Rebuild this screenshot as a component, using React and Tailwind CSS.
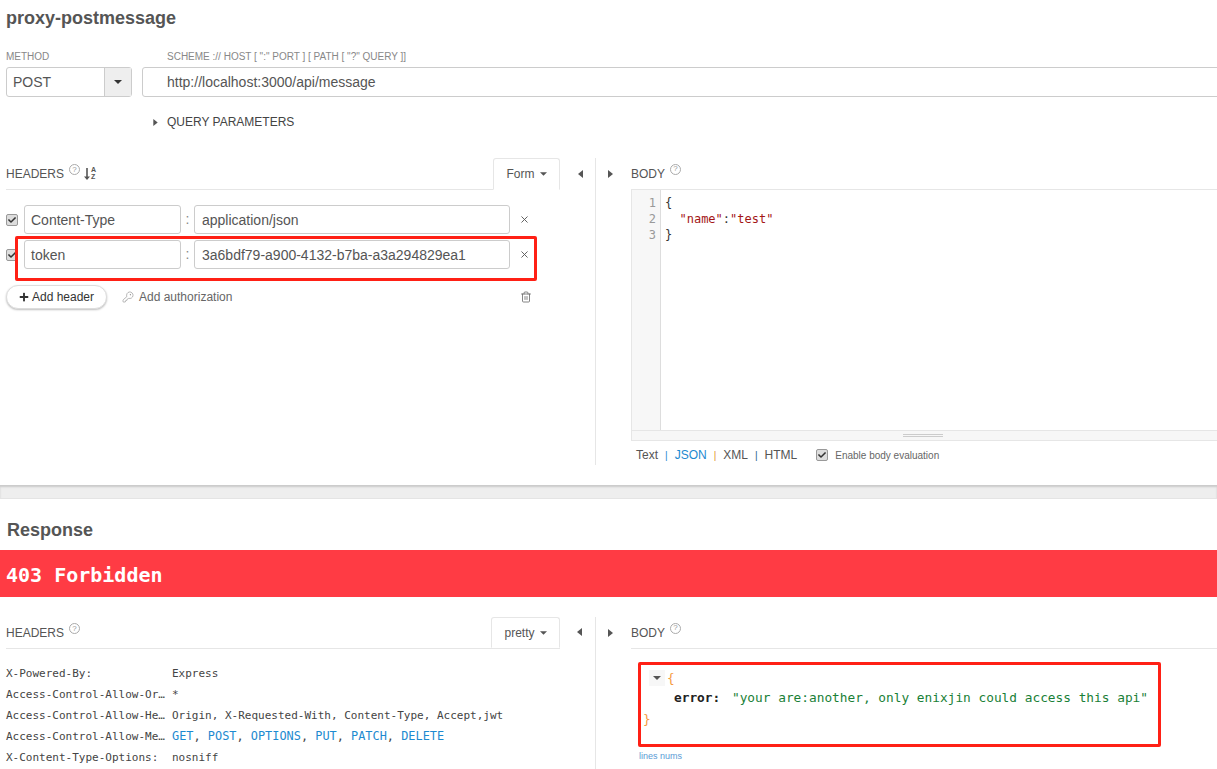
import React from "react";
import { FaCheck, FaPlus } from "react-icons/fa";
import { X, Trash2, KeyRound } from "lucide-react";

const SANS = "font-['Liberation_Sans',Arial,sans-serif]";
const MONO = "font-['DejaVu_Sans_Mono',monospace]";

const Caret = ({ dir = "down", className = "" }) => {
  const points = {
    down: "0,0 8,0 4,4",
    left: "5,0 5,8 0,4",
    right: "0,0 5,4 0,8",
  }[dir];
  const size = dir === "down" ? [8, 4] : [5, 8];
  return (
    <svg width={size[0]} height={size[1]} viewBox={`0 0 ${size[0]} ${size[1]}`} className={className}>
      <polygon points={points} fill="currentColor" />
    </svg>
  );
};

const Help = () => (
  <span className="ml-[5px] mb-[9px] flex h-[11px] w-[11px] items-center justify-center rounded-full border border-[#aaa] text-[8px] leading-none text-[#999]">
    ?
  </span>
);

const Check = () => (
  <span className="flex h-[12px] w-[12px] shrink-0 items-center justify-center rounded-[2px] border border-[#999] bg-[#ddd] text-[#333]">
    <FaCheck size={8} />
  </span>
);

const Field = ({ value, className = "" }) => (
  <div className={`flex h-[29px] items-center rounded-[3px] border border-[#ccc] bg-white pt-[1px] text-[14px] text-[#555] ${className}`}>
    {value}
  </div>
);

const HeaderRow = ({ name, value }) => (
  <div className="flex h-[29px] items-center">
    <Check />
    <Field value={name} className="ml-[6px] w-[157px] pl-[6px]" />
    <span className="w-[13px] text-center text-[14px] text-[#888]">:</span>
    <Field value={value} className="w-[316px] pl-[7px]" />
    <X size={11} strokeWidth={2} className="ml-[9px] text-[#555]" />
  </div>
);

const Sep = ({ className = "" }) => <span className={`text-[10px] ${className}`}>|</span>;

const RespHeader = ({ name, children, className = "" }) => (
  <div className="flex h-[21px] items-center whitespace-pre">
    <span className="w-[166px] text-[#444]">{name}</span>
    <span className={`text-[#444] ${className}`}>{children}</span>
  </div>
);

const Method = ({ children }) => <span className="text-[#1d8ad0]">{children}</span>;

export default function App() {
  return (
    <div className={`${SANS} relative h-[769px] w-[1217px] overflow-hidden bg-white text-[#555]`}>
      {/* Request */}
      <div className="h-[485px]">
        <h1 className="flex h-[37px] items-center pl-[6px] text-[18px] font-bold text-[#555]">proxy-postmessage</h1>
        <div className="flex h-[30px] items-end pb-[5px] text-[10px] leading-none text-[#888]">
          <span className="w-[167px] pl-[6px]">METHOD</span>
          <span>SCHEME :// HOST [ ":" PORT ] [ PATH [ "?" QUERY ]]</span>
        </div>
        <div className="flex h-[30px] pl-[6px]">
          <div className="flex h-[30px] w-[126px] shrink-0 rounded-[3px] border border-[#ccc] text-[14px]">
            <span className="flex flex-1 items-center pl-[6px] text-[#555]">POST</span>
            <span className="flex w-[27px] items-center justify-center border-l border-[#ccc] bg-[#eee] text-[#333]">
              <Caret />
            </span>
          </div>
          <div className="ml-[10px] flex h-[30px] w-[1100px] shrink-0 items-center rounded-[3px] border border-[#ccc] pl-[24px] text-[14px] text-[#555]">
            http://localhost:3000/api/message
          </div>
        </div>
        <div className="mt-[17px] flex h-[16px] items-center text-[12px] text-[#444]">
          <Caret dir="right" className="ml-[153px] mr-[9px] h-[7px] text-[#555]" />
          QUERY PARAMETERS
        </div>

        <div className="mt-[28px] flex h-[307px]">
          {/* Request headers */}
          <div className="flex w-[596px] shrink-0 border-r border-[#e6e6e6] pl-[6px]">
            <div className="w-[554px]">
              <div className="flex h-[32px] items-center justify-between border-b border-[#e6e6e6]">
                <div className="flex items-center pt-[1px] text-[12px] text-[#555]">
                  HEADERS
                  <Help />
                  <span className="relative ml-[4px] flex h-[14px] w-[12px] items-center text-[#555]">
                    <svg width="6" height="12" viewBox="0 0 6 12">
                      <path d="M2.2 0h1.6v8.5H6L3 12 0 8.5h2.2z" fill="currentColor" />
                    </svg>
                    <span className="absolute right-0 top-[-1px] text-[7px] font-bold leading-[7px]">
                      A
                      <br />Z
                    </span>
                  </span>
                </div>
                <div className="flex h-[32px] w-[67px] items-center justify-center gap-[5px] rounded-t-[3px] border border-b-white border-[#e6e6e6] text-[12px] text-[#555]">
                  Form <Caret className="h-[4px] w-[7px]" />
                </div>
              </div>
              <div className="relative mt-[15px] flex flex-col gap-[6px]">
                <HeaderRow name="Content-Type" value="application/json" />
                <HeaderRow name="token" value="3a6bdf79-a900-4132-b7ba-a3a294829ea1" />
                <div className="absolute left-[9px] top-[31px] h-[45px] w-[522px] rounded-[2px] border-[3px] border-[#ff2015]" />
              </div>
              <div className="mt-[16px] flex h-[24px] items-center text-[12px]">
                <div className="flex h-[24px] w-[101px] items-center justify-center gap-[3px] rounded-full border border-[#ddd] bg-white text-[#333] shadow-[0_1px_2px_rgba(0,0,0,0.25)]">
                  <FaPlus size={10} /> Add header
                </div>
                <KeyRound size={12} strokeWidth={1.2} className="ml-[15px] text-[#888]" />
                <span className="ml-[5px] text-[#666]">Add authorization</span>
                <Trash2 size={12} strokeWidth={1.6} className="ml-[288px] text-[#666]" />
              </div>
            </div>
            <div className="flex h-[32px] flex-1 items-center justify-center pl-[5px] text-[#555]">
              <Caret dir="left" />
            </div>
          </div>

          {/* Request body */}
          <div className="flex min-w-0 flex-1 flex-col pr-0">
            <div className="flex h-[31px] shrink-0 items-center">
              <span className="flex w-[35px] justify-center pr-[6px] text-[#555]">
                <Caret dir="right" />
              </span>
              <span className="flex items-center text-[12px] text-[#555]">
                BODY
                <Help />
              </span>
            </div>
            <div className="ml-[35px] flex h-[252px] flex-col border-y border-l border-[#e6e6e6]">
              <div className={`${MONO} flex flex-1 text-[12px] leading-[16px]`}>
                <div className="w-[29px] border-r border-[#ddd] bg-[#f7f7f7] pr-[4px] pt-[5px] text-right text-[#999]">
                  <div>1</div>
                  <div>2</div>
                  <div>3</div>
                </div>
                <div className="whitespace-pre pl-[4px] pt-[5px] text-[#333]">
                  <div>{"{"}</div>
                  <div>
                    {"  "}
                    <span className="text-[#a31515]">"name"</span>:<span className="text-[#a31515]">"test"</span>
                  </div>
                  <div>{"}"}</div>
                </div>
              </div>
              <div className="flex h-[10px] items-center justify-center border-t border-[#e6e6e6] bg-[#f7f7f7]">
                <div className="ml-[-3px] h-[3px] w-[40px] border-y border-[#ccc]" />
              </div>
            </div>
            <div className="ml-[40px] mt-[6px] flex h-[16px] items-center text-[12px] text-[#555]">
              <span>Text</span>
              <Sep className="mx-[7px] text-[#1d8ad0]" />
              <span className="text-[#1d8ad0]">JSON</span>
              <Sep className="mx-[7px] text-[#e0912f]" />
              <span>XML</span>
              <Sep className="mx-[7px] text-[#1d5f8a]" />
              <span>HTML</span>
              <span className="ml-[19px]">
                <Check />
              </span>
              <span className="ml-[7px] text-[10px] text-[#666]">Enable body evaluation</span>
            </div>
          </div>
        </div>
      </div>

      <div className="h-[14px] border-b border-[#e4e4e4] bg-[#eee] shadow-[inset_0_2px_2px_rgba(0,0,0,0.15)]" />

      {/* Response */}
      <h2 className="flex h-[51px] items-end pb-[9px] pl-[7px] text-[18px] font-bold leading-[22px] text-[#555]">Response</h2>
      <div className={`${MONO} flex h-[47px] items-center bg-[#ff3b44] pl-[6px] pt-[2px] text-[20px] font-bold text-white`}>
        403 Forbidden
      </div>

      <div className="mt-[20px] flex h-[152px]">
        {/* Response headers */}
        <div className="flex w-[596px] shrink-0 border-r border-[#e6e6e6] pl-[6px]">
          <div className="w-[554px]">
            <div className="flex h-[32px] items-end justify-between border-b border-[#e6e6e6]">
              <div className="flex h-[30px] items-center text-[12px] text-[#555]">
                HEADERS
                <Help />
              </div>
              <div className="flex h-[31px] w-[69px] items-center justify-center gap-[5px] rounded-t-[3px] border border-b-white border-[#e6e6e6] text-[12px] text-[#555]">
                pretty <Caret className="h-[4px] w-[7px]" />
              </div>
            </div>
            <div className={`${MONO} mt-[15px] text-[11px]`}>
              <RespHeader name="X-Powered-By:">Express</RespHeader>
              <RespHeader name="Access-Control-Allow-Or…">*</RespHeader>
              <RespHeader name="Access-Control-Allow-He…">Origin, X-Requested-With, Content-Type, Accept,jwt</RespHeader>
              <RespHeader name="Access-Control-Allow-Me…" className="pb-[2px] text-[11.9px]">
                <Method>GET</Method>, <Method>POST</Method>, <Method>OPTIONS</Method>, <Method>PUT</Method>, <Method>PATCH</Method>, <Method>DELETE</Method>
              </RespHeader>
              <RespHeader name="X-Content-Type-Options:">nosniff</RespHeader>
            </div>
          </div>
          <div className="flex h-[30px] flex-1 items-center justify-center pl-[3px] text-[#555]">
            <Caret dir="left" />
          </div>
        </div>

        {/* Response body */}
        <div className="min-w-0 flex-1">
          <div className="flex h-[30px] items-center pt-[1px]">
            <span className="flex w-[35px] justify-center pr-[6px] text-[#555]">
              <Caret dir="right" />
            </span>
            <span className="flex items-center text-[12px] text-[#555]">
              BODY
              <Help />
            </span>
          </div>
          <div className="ml-[35px] mt-[1px] h-[1px] bg-[#e6e6e6]" />
          <div className={`${MONO} ml-[42px] mt-[13px] h-[85px] w-[523px] whitespace-pre rounded-[2px] border-[3px] border-[#ff2015] pt-[2px] text-[12.8px] leading-[20px]`}>
            <div className="flex h-[21px] items-center pl-[8px]">
              <span className="flex h-[16px] w-[16px] items-center justify-center bg-[#f7f7f7] text-[#555]">
                <Caret />
              </span>
              <span className="ml-[2px] text-[#f59b42]">{"{"}</span>
            </div>
            <div className="pl-[33px]">
              <span className="mr-[4px] font-bold text-[#222]">error:</span>{" "}
              <span className="text-[#1a7f37]">"your are:another, only enixjin could access this api"</span>
            </div>
            <div className="pl-[2px] pt-[1px] text-[#f59b42]">{"}"}</div>
          </div>
          <div className="ml-[43px] mt-[3px] text-[9px] leading-[12px] text-[#5b9bd5]">lines nums</div>
        </div>
      </div>
    </div>
  );
}
